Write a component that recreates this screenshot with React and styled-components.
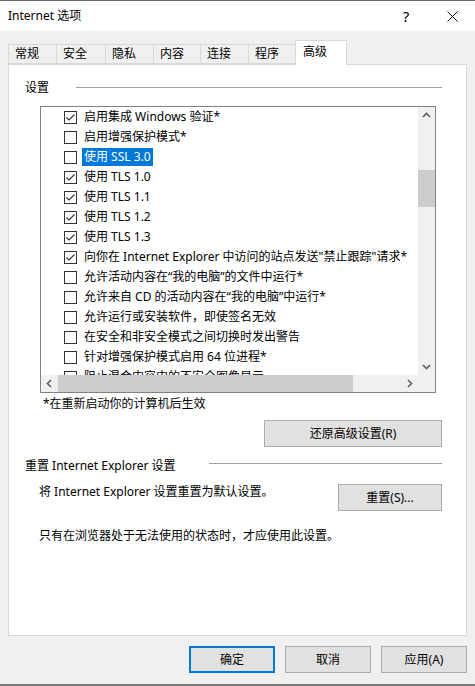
import React from "react";
import styled, {createGlobalStyle} from "styled-components";

const GlobalStyle = createGlobalStyle`
    html, body {
        margin: 0;
        padding: 0;
        background: #f0f0f0;
    }
    body {
        font-family: "Noto Sans", "Noto Sans CJK SC", sans-serif;
        font-size: 12px;
        color: #000;
    }
`;

const Window = styled.div`
    width: 475px;
    height: 686px;
    box-sizing: border-box;
    border-top: 1px solid #6b6b6b;
    border-bottom: 2px solid #7a7a7a;
    background: #f0f0f0;
    display: flex;
    flex-direction: column;
    overflow: hidden;
`;

const TitleBar = styled.div`
    height: 30px;
    background: #fff;
    display: flex;
    align-items: center;
    padding-left: 8px;
`;

const Title = styled.div`
    line-height: 16px;
    flex: 1;
`;

const TitleButton = styled.div`
    width: 46px;
    height: 30px;
    display: flex;
    align-items: center;
    justify-content: center;
    font-size: 15px;
`;

const Body = styled.div`
    display: flex;
    flex-direction: column;
    padding: 9px 8px 0 8px;
`;

const TabStrip = styled.div`
    display: flex;
    align-items: flex-start;
    height: 25px;
    margin-bottom: -1px;
    position: relative;
    z-index: 1;
`;

const Tab = styled.div`
    box-sizing: border-box;
    width: ${p => p.$width}px;
    height: ${p => (p.$active ? 25 : 20)}px;
    margin-top: ${p => (p.$active ? 0 : 4)}px;
    margin-left: ${p => (p.$first ? 0 : -1)}px;
    padding: ${p => (p.$active ? '3px 0 0 7px' : '1px 0 0 6px')};
    border: 1px solid #d9d9d9;
    border-bottom: ${p => (p.$active ? 'none' : '1px solid #d9d9d9')};
    background: ${p => (p.$active ? '#fff' : '#f0f0f0')};
    line-height: 16px;
    white-space: nowrap;
`;

const Panel = styled.div`
    box-sizing: border-box;
    height: 572px;
    background: #fff;
    border: 1px solid #d9d9d9;
    display: flex;
    flex-direction: column;
`;

const GroupHeader = styled.div`
    display: flex;
    align-items: center;
    height: 16px;
    margin: ${p => p.$top}px 24px 0 16px;
`;

const GroupLabel = styled.div`
    line-height: 16px;
    white-space: nowrap;
`;

const GroupLine = styled.div`
    flex: 1;
    height: 1px;
    background: #a0a0a0;
    margin-left: ${p => p.$gap}px;
    margin-bottom: ${p => p.$lift * 2}px;
`;

const ListBox = styled.div`
    box-sizing: border-box;
    width: 396px;
    height: 287px;
    margin: 10px 0 0 31px;
    border: 1px solid #828282;
    display: grid;
    grid-template-columns: 1fr 17px;
    grid-template-rows: 1fr 17px;
    overflow: hidden;
`;

const Rows = styled.div`
    overflow: hidden;
    padding-left: 23px;
`;

const Row = styled.div`
    height: 20px;
    display: flex;
    align-items: center;
    white-space: nowrap;
`;

const Box = styled.div`
    box-sizing: border-box;
    width: 13px;
    height: 13px;
    border: 1px solid #333;
    background: #fff;
    flex-shrink: 0;
    display: flex;
    align-items: center;
    justify-content: center;
`;

const RowLabel = styled.span`
    height: 18px;
    line-height: 18px;
    padding: 0 2px;
    margin-left: 5px;
    background: ${p => (p.$selected ? '#0078d7' : 'transparent')};
    color: ${p => (p.$selected ? '#fff' : '#000')};
`;

const VScroll = styled.div`
    background: #f0f0f0;
    display: flex;
    flex-direction: column;
`;

const HScroll = styled.div`
    background: #f0f0f0;
    display: flex;
`;

const Corner = styled.div`
    background: #f0f0f0;
`;

const ArrowButton = styled.div`
    width: 17px;
    height: 17px;
    flex-shrink: 0;
    display: flex;
    align-items: center;
    justify-content: center;
`;

const VTrack = styled.div`
    flex: 1;
`;

const VThumb = styled.div`
    height: 37px;
    margin-top: ${p => p.$offset}px;
    background: #cdcdcd;
`;

const HTrack = styled.div`
    flex: 1;
`;

const HThumb = styled.div`
    height: 17px;
    width: ${p => p.$size}px;
    margin-left: ${p => p.$offset}px;
    background: #cdcdcd;
`;

const Note = styled.div`
    line-height: 16px;
    margin: ${p => p.$top}px 0 0 ${p => p.$left}px;
    white-space: nowrap;
`;

const Button = styled.div`
    box-sizing: border-box;
    width: ${p => p.$width}px;
    height: 27px;
    background: #e1e1e1;
    border: ${p => (p.$default ? '2px solid #0078d7' : '1px solid #adadad')};
    display: flex;
    align-items: center;
    justify-content: center;
    line-height: 16px;
    flex-shrink: 0;
`;

const RestoreButton = styled(Button)`
    align-self: flex-end;
    margin: 8px 24px 0 0;
`;

const ResetRow = styled.div`
    display: flex;
    align-items: flex-start;
    margin: 10px 24px 0 30px;
`;

const ResetText = styled.div`
    flex: 1;
    line-height: 16px;
    white-space: nowrap;
`;

const Footer = styled.div`
    display: flex;
    justify-content: flex-end;
    gap: 10px;
    margin-top: 10px;
`;

const Chevron = ({dir}) => {
    const rot = {up: 0, right: 90, down: 180, left: 270}[dir];
    return (
        <svg width="9" height="9" viewBox="0 0 9 9" style={{transform: `rotate(${rot}deg)`}}>
            <polyline points="1,6 4.5,2.5 8,6" fill="none" stroke="#606060" strokeWidth="1.6"/>
        </svg>
    );
};

const Check = () => (
    <svg width="11" height="11" viewBox="0 0 11 11">
        <polyline points="1.5,5.5 4,8 9.5,2.5" fill="none" stroke="#333" strokeWidth="1.1"/>
    </svg>
);

const tabs = [
    {label: '常规', width: 49},
    {label: '安全', width: 50},
    {label: '隐私', width: 49},
    {label: '内容', width: 48},
    {label: '连接', width: 49},
    {label: '程序', width: 48},
    {label: '高级', width: 52, active: true},
];

const settings = [
    {text: '启用集成 Windows 验证*', checked: true},
    {text: '启用增强保护模式*'},
    {text: '使用 SSL 3.0', selected: true},
    {text: '使用 TLS 1.0', checked: true},
    {text: '使用 TLS 1.1', checked: true},
    {text: '使用 TLS 1.2', checked: true},
    {text: '使用 TLS 1.3', checked: true},
    {text: '向你在 Internet Explorer 中访问的站点发送"禁止跟踪"请求*', checked: true},
    {text: '允许活动内容在“我的电脑”的文件中运行*'},
    {text: '允许来自 CD 的活动内容在“我的电脑”中运行*'},
    {text: '允许运行或安装软件，即使签名无效'},
    {text: '在安全和非安全模式之间切换时发出警告'},
    {text: '针对增强保护模式启用 64 位进程*'},
    {text: '阻止混合内容中的不安全图像显示'},
];

const App = () => {
    return (
        <>
            <GlobalStyle/>
            <Window>
                <TitleBar>
                    <Title>Internet 选项</Title>
                    <TitleButton>?</TitleButton>
                    <TitleButton>
                        <svg width="11" height="11" viewBox="0 0 11 11">
                            <path d="M0.5 0.5 L10.5 10.5 M10.5 0.5 L0.5 10.5" stroke="#111" strokeWidth="1"/>
                        </svg>
                    </TitleButton>
                </TitleBar>
                <Body>
                    <TabStrip>
                        {tabs.map((t, i) => (
                            <Tab key={t.label} $width={t.width} $active={t.active} $first={i === 0}>
                                {t.label}
                            </Tab>
                        ))}
                    </TabStrip>
                    <Panel>
                        <GroupHeader $top={15}>
                            <GroupLabel>设置</GroupLabel>
                            <GroupLine $gap={27} $lift={1}/>
                        </GroupHeader>
                        <ListBox>
                            <Rows>
                                {settings.map(s => (
                                    <Row key={s.text}>
                                        <Box>{s.checked && <Check/>}</Box>
                                        <RowLabel $selected={s.selected}>{s.text}</RowLabel>
                                    </Row>
                                ))}
                            </Rows>
                            <VScroll>
                                <ArrowButton><Chevron dir="up"/></ArrowButton>
                                <VTrack><VThumb $offset={46}/></VTrack>
                                <ArrowButton><Chevron dir="down"/></ArrowButton>
                            </VScroll>
                            <HScroll>
                                <ArrowButton><Chevron dir="left"/></ArrowButton>
                                <HTrack><HThumb $offset={0} $size={295}/></HTrack>
                                <ArrowButton><Chevron dir="right"/></ArrowButton>
                            </HScroll>
                            <Corner/>
                        </ListBox>
                        <Note $top={3} $left={34}>*在重新启动你的计算机后生效</Note>
                        <RestoreButton $width={178}>还原高级设置(R)</RestoreButton>
                        <GroupHeader $top={11}>
                            <GroupLabel>重置 Internet Explorer 设置</GroupLabel>
                            <GroupLine $gap={33} $lift={3}/>
                        </GroupHeader>
                        <ResetRow>
                            <ResetText>将 Internet Explorer 设置重置为默认设置。</ResetText>
                            <Button $width={104}>重置(S)...</Button>
                        </ResetRow>
                        <Note $top={17} $left={30}>只有在浏览器处于无法使用的状态时，才应使用此设置。</Note>
                    </Panel>
                    <Footer>
                        <Button $width={86} $default>确定</Button>
                        <Button $width={86}>取消</Button>
                        <Button $width={86}>应用(A)</Button>
                    </Footer>
                </Body>
            </Window>
        </>
    );
};

export default App;
